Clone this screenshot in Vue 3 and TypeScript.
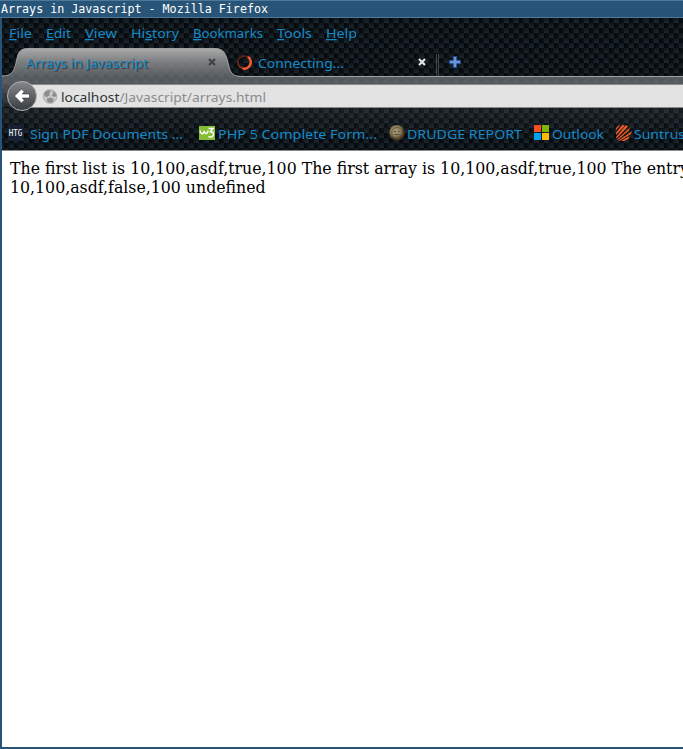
<script setup lang="ts">
interface MenuItem { pre: string; key: string; post: string; width: number }
const menus: MenuItem[] = [
  { pre: '', key: 'F', post: 'ile', width: 23 },
  { pre: '', key: 'E', post: 'dit', width: 25 },
  { pre: '', key: 'V', post: 'iew', width: 32 },
  { pre: 'Hi', key: 's', post: 'tory', width: 48 },
  { pre: '', key: 'B', post: 'ookmarks', width: 70 },
  { pre: '', key: 'T', post: 'ools', width: 35 },
  { pre: '', key: 'H', post: 'elp', width: 31 },
]
</script>

<template>
  <div class="window">
    <svg class="titlebar" width="683" height="18">
      <text x="1" y="12" textLength="267" lengthAdjust="spacingAndGlyphs">Arrays in Javascript - Mozilla Firefox</text>
    </svg>
    <div class="chrome">
      <svg class="texture" width="681" height="132" viewBox="2 18 681 132">
        <defs>
          <linearGradient id="weave-light" x1="0" y1="0" x2="0" y2="1">
            <stop offset="0" stop-color="#10161a" /><stop offset="1" stop-color="#1a2630" />
          </linearGradient>
          <linearGradient id="weave-dark" x1="0" y1="0" x2="1" y2="0">
            <stop offset="0" stop-color="#050709" /><stop offset="1" stop-color="#0d1216" />
          </linearGradient>
          <pattern id="weave" x="4" y="23" width="10" height="10" patternUnits="userSpaceOnUse">
            <rect width="5" height="5" fill="url(#weave-dark)" />
            <rect x="5" width="5" height="5" fill="url(#weave-light)" />
            <rect y="5" width="5" height="5" fill="url(#weave-light)" />
            <rect x="5" y="5" width="5" height="5" fill="url(#weave-dark)" />
          </pattern>
          <linearGradient id="sheen" x1="0" y1="0" x2="0" y2="1">
            <stop offset="0" stop-color="#fff" stop-opacity=".07" /><stop offset="1" stop-color="#fff" stop-opacity="0" />
          </linearGradient>
        </defs>
        <rect x="2" y="18" width="681" height="132" fill="url(#weave)" />
        <rect x="2" y="108" width="681" height="28" fill="url(#sheen)" />
      </svg>
      <nav class="menubar">
        <svg v-for="m in menus" :key="m.key" :width="m.width + 14" height="30">
          <text x="0" y="20" :textLength="m.width" lengthAdjust="spacingAndGlyphs">{{ m.pre }}<tspan class="mnemonic">{{ m.key }}</tspan>{{ m.post }}</text>
        </svg>
      </nav>
      <div class="tabs">
        <svg width="681" height="29" viewBox="2 48 681 29">
          <defs>
            <linearGradient id="tab" x1="0" y1="0" x2="0" y2="1">
              <stop offset="0" stop-color="#b2b2b2" stop-opacity=".95" />
              <stop offset=".5" stop-color="#8b8d8f" stop-opacity=".86" />
              <stop offset="1" stop-color="#74787b" stop-opacity=".72" />
            </linearGradient>
            <linearGradient id="spin" x1="0" y1="0" x2="1" y2="1">
              <stop offset="0" stop-color="#4a1710" /><stop offset=".45" stop-color="#8a2c19" /><stop offset="1" stop-color="#ff6c38" />
            </linearGradient>
          </defs>
          <path d="M2 77V76C12 76 14 71 16 63C18 53 19 48.5 28 48.5H215C224 48.5 226 54 228 63C230 72 232 76 241 76V77Z" fill="url(#tab)" />
          <path d="M2 76C12 76 14 71 16 63C18 53 19 48.5 28 48.5H215C224 48.5 226 54 228 63C230 72 232 76.5 241 76.5H683" fill="none" stroke="#a0a0a0" />
          <text class="tab-title active" x="26" y="68" textLength="122" lengthAdjust="spacingAndGlyphs">Arrays in Javascript</text>
          <path d="M209 59L215 65M215 59L209 65" stroke="#404345" stroke-width="2.2" />
          <circle cx="244.3" cy="62.3" r="6.4" fill="none" stroke="url(#spin)" stroke-width="1.4" />
          <path d="M248 57A6.4 6.4 0 0 1 243 68.5" fill="none" stroke="#f45a30" stroke-width="2.6" />
          <text class="tab-title" x="258" y="68" textLength="86" lengthAdjust="spacingAndGlyphs">Connecting...</text>
          <path d="M419 59L425 65M425 59L419 65" stroke="#e5e5e5" stroke-width="2.2" />
          <path d="M436.5 54V76M438.5 54V76" stroke="#464646" />
          <path d="M453.3 56.5H456.7V60.3H460.5V63.7H456.7V67.5H453.3V63.7H449.5V60.3H453.3Z" fill="#6a97d8" stroke="#294c91" />
        </svg>
      </div>
      <div class="navigation">
        <svg width="681" height="38" viewBox="2 77 681 38">
          <defs>
            <linearGradient id="button" x1="0" y1="0" x2="0" y2="1">
              <stop offset="0" stop-color="#85888b" /><stop offset="1" stop-color="#383c40" />
            </linearGradient>
            <linearGradient id="behind" x1="0" y1="0" x2="0" y2="1">
              <stop offset="0" stop-color="#74787b" stop-opacity=".66" /><stop offset="1" stop-color="#606468" stop-opacity=".25" />
            </linearGradient>
          </defs>
          <rect x="2" y="77" width="681" height="7" fill="#7c7f82" fill-opacity=".66" />
          <rect x="2" y="84" width="32" height="23" fill="url(#behind)" />
          <path d="M30 84.5H683M30 107.5H683" stroke="#8a8a8a" />
          <rect x="30" y="85" width="653" height="22" fill="#ebebeb" fill-opacity=".96" />
          <circle cx="22" cy="96" r="14.5" fill="url(#button)" stroke="#aeb2b5" />
          <path d="M14.5 96L21.5 89L24.3 91.7L22.3 94H29.5V98H22.3L24.3 100.3L21.5 103Z" fill="#fff" stroke="#303438" stroke-width=".6" />
          <circle cx="50" cy="96.5" r="6.8" fill="#c9c9c9" stroke="#a2a2a2" stroke-width=".8" />
          <path d="M44 94Q45 90.5 49 90L51 91.5L49 93L50 95L47 97L45 96.5ZM52 91Q56 92 56.5 96L54 97L51.5 95.5L53.5 93.5ZM47 98.5L51 97.5L54 99.5L52.5 102.5Q49 103.5 47 101.5Z" fill="#8d8d8d" />
          <text class="address" x="61" y="102" textLength="205" lengthAdjust="spacingAndGlyphs"><tspan class="host">localhost</tspan>/Javascript/arrays.html</text>
        </svg>
      </div>
      <div class="bookmarks">
        <svg width="681" height="35" viewBox="2 115 681 35">
          <rect x="8" y="125" width="16" height="16" fill="#172235" />
          <text class="htg" x="8.7" y="136" textLength="13.6" lengthAdjust="spacingAndGlyphs">HTG</text>
          <text x="30" y="139" textLength="153" lengthAdjust="spacingAndGlyphs">Sign PDF Documents ...</text>
          <rect x="199" y="126" width="16" height="14" fill="#86bd36" />
          <path d="M200 130.5Q201 134.5 203 133.5L204.3 131.5L205.5 133.5Q207.5 134 208 130.5M208.5 128.5H213L210.3 131.7Q214 131.5 213.3 135Q212 138.5 208.5 136.3" fill="none" stroke="#fff" stroke-width="1.4" />
          <text x="218" y="139" textLength="159" lengthAdjust="spacingAndGlyphs">PHP 5 Complete Form...</text>
          <radialGradient id="coin" cx=".42" cy=".38"><stop offset="0" stop-color="#a39575" /><stop offset=".65" stop-color="#8f7f5e" /><stop offset="1" stop-color="#43361f" /></radialGradient>
          <circle cx="397" cy="132.8" r="7.8" fill="url(#coin)" />
          <circle cx="397" cy="132.8" r="5.3" fill="none" stroke="#6b5c3e" />
          <path d="M394 131.5H396M398 131.5H400M394.5 134.5H399.5" fill="none" stroke="#5d5038" />
          <text x="407" y="139" textLength="115" lengthAdjust="spacingAndGlyphs">DRUDGE REPORT</text>
          <path d="M534 125H541V132H534Z" fill="#f65022" /><path d="M542 125H549V132H542Z" fill="#7eb900" />
          <path d="M534 133H541V140H534Z" fill="#00a1ef" /><path d="M542 133H549V140H542Z" fill="#ffb900" />
          <text x="552" y="139" textLength="52" lengthAdjust="spacingAndGlyphs">Outlook</text>
          <g fill="#f05a24">
            <path d="M616 128L618.5 125.5L620 125.5L616 130Z" />
            <path d="M616 132.5L622.5 125L625 125.5L616 135Z" />
            <path d="M616 137L626 125L628 126.5L616.5 138.5Z" />
            <path d="M617 139.5L630 127.5L629 130.5L618 140Z" />
            <path d="M618.5 140.5L632 131L631 134L620 140.8Z" />
            <path d="M621 141L629.5 136L628.5 139L624 141Z" />
          </g>
          <text x="634" y="139" textLength="56" lengthAdjust="spacingAndGlyphs">Suntrust</text>
        </svg>
      </div>
    </div>
    <main class="page">
      <p>The first list is 10,100,asdf,true,100 The first array is 10,100,asdf,true,100 The entry<br>10,100,asdf,false,100 undefined</p>
    </main>
  </div>
</template>

<style>
body { overflow: hidden; }
</style>

<style scoped>
.window { box-sizing: border-box; width: 683px; height: 749px; overflow: hidden; background: #285577; display: flex; flex-direction: column; }
svg { display: block; flex-shrink: 0; position: relative; }
.titlebar { box-sizing: border-box; border-top: 1px solid #4c7899; border-bottom: 1px solid #4c7899; fill: white; font: 12px "DejaVu Sans Mono", monospace; }
.chrome {
  box-sizing: border-box; position: relative; margin-left: 2px; height: 133px; border-bottom: 1px solid #8a8a8a;
  background: #0b1013; font: 13px "Noto Sans", sans-serif; fill: #168ac8;
}
.texture { position: absolute; top: 0; left: 0; }
.menubar { display: flex; height: 30px; padding-left: 7px; }
.mnemonic { text-decoration: underline; }
.tabs { height: 29px; }
.tab-title.active { text-shadow: 1px 1px 1px #383838; }
.navigation { height: 38px; }
.address { fill: #8c8c8c; }
.host { fill: #303437; }
.bookmarks { height: 35px; }
.htg { font: 8px "DejaVu Sans Mono", monospace; fill: white; }
.page { flex: 1; margin: 0 0 2px 2px; padding: 8px 8px; background: white; color: #000; font: 15.78px/19px "DejaVu Serif", serif; }
p { margin: 0; white-space: nowrap; }
</style>
